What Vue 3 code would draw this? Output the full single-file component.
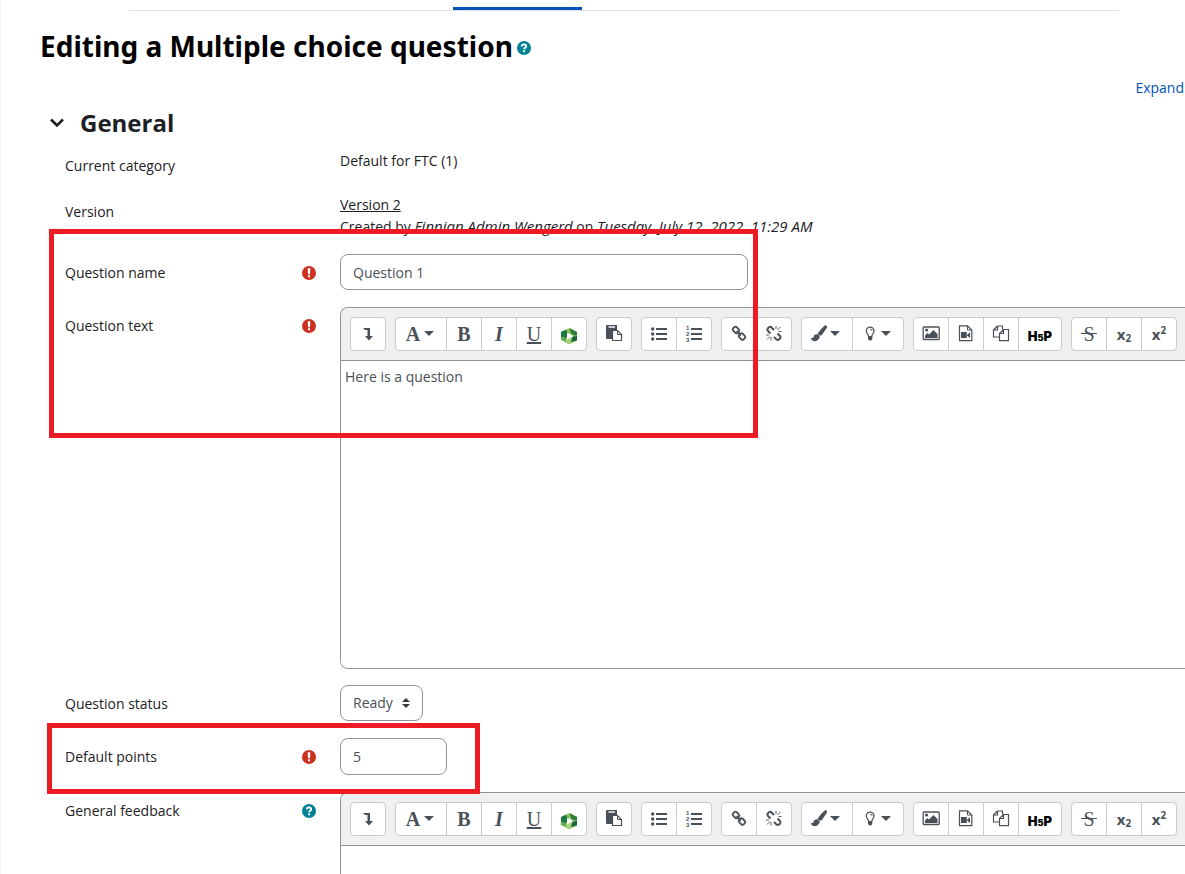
<script setup>
import { ref } from 'vue'

const name = ref('Question 1')
const status = ref('Ready')
const points = ref('5')
const bodies = ref(['Here is a question', ''])

const ink = '#495057'
const f = (d, fill = ink) => ({ d, fill, stroke: 'none', w: 0 })
const s = (d, w = 1, fill = 'none') => ({ d, fill, stroke: ink, w })

const icons = {
  toggle: [f('M4 3H11V11H14L10 15.5L6 11H8.5V5H6Z')],
  paste: [
    f('M2 0H12V5H8V14H2Q1 14 1 13V1Q1 0 2 0Z'),
    f('M3.500 1H10V3H3.500Z', '#c9ccd0'),
    s('M7.500 5.500H12.500L16.500 9.500V15.500H7.500Z', 1.200, '#fff'),
    s('M12.500 5.500V9.500H16.500'),
  ],
  list: [
    f('M1 4a1.700 1.700 0 1 0 3.400 0a1.700 1.700 0 1 0-3.400 0M1 9a1.700 1.700 0 1 0 3.400 0a1.700 1.700 0 1 0-3.400 0M1 14a1.700 1.700 0 1 0 3.400 0a1.700 1.700 0 1 0-3.400 0'),
    f('M6 3H17V5H6ZM6 8H17V10H6ZM6 13H17V15H6Z'),
  ],
  numbers: [f('M6 3H17V5H6ZM6 8H17V10H6ZM6 13H17V15H6Z')],
  link: [
    s('M3 3.500L4.500 2Q5.500 1.200 6.500 2L9 4.500Q9.800 5.500 9 6.500L7.500 8Q6.500 8.800 5.500 8L3 5.500Q2.200 4.500 3 3.500Z', 1.800),
    s('M9 10L10.500 8.500Q11.500 7.700 12.500 8.500L15 11Q15.800 12 15 13L13.500 14.500Q12.500 15.300 11.500 14.500L9 12Q8.200 11 9 10Z', 1.800),
    s('M6.500 6L11 10.500', 1.800),
  ],
  unlink: [
    s('M5.500 8.500L3 6Q1.800 4.500 3 3.200L4 2.200Q5.300 1.200 6.500 2.500L9 5', 2),
    s('M9 12L11.500 14.500Q13 15.500 14.200 14.300L15 13.500Q16 12 15 11L12.500 8.500', 2),
    s('M11 4V1M12.500 5L15.500 2M13.500 6.500H16.500M6 12V15.500M5 11.500L2 14.500M4 10H1', 0.900),
  ],
  brush: [
    f('M15 .2Q17.500 0 17 2.500L11.500 10.500Q9.600 11 7.500 8.700Q11 3.500 15 .2Z'),
    f('M7 9.300Q10 10 9.700 12.600Q8 16.200 4.300 16.200Q2 16 .700 13.500L3.500 12.500Q3.800 9.300 7 9.300Z'),
  ],
  bulb: [
    s('M7.500 11.500Q7.500 10 6.300 8.600Q4.300 5.500 6.300 3.300Q9 1 12 3.300Q14 5.500 12 8.600Q10.800 10 10.800 11.500', 1.200),
    s('M9.200 4.300Q11 4.300 11.200 6'),
    f('M7 11H11.300V14L10 15.500H8.300L7 14Z'),
  ],
  image: [
    s('M2 2H16.500Q17.200 2 17.200 3V13.500Q17.200 14.500 16.500 14.500H2Q1.200 14.500 1.200 13.500V3Q1.200 2 2 2Z', 1.300),
    f('M3 5a1.600 1.600 0 1 0 3.200 0a1.600 1.600 0 1 0-3.200 0M3 13V10.500L5.500 8L7 9.500L11.500 5L15.500 9V13Z'),
  ],
  video: [
    s('M2.500 .8H10.500L14.800 5V15.700H2.500Z', 1.200),
    s('M10.500 .8V5H14.800'),
    f('M4 7H9.800V13H4ZM10 10L13 7V13L10 10.500Z'),
  ],
  files: [
    s('M5.500 1H10.500V4.500M5.500 1L1.500 5V12H7.500M5.500 1V5H1.500', 1.200),
    s('M11.500 4.500H16.500V15.700H7.500V8.500ZM11.500 4.500V8.500H7.500', 1.200),
  ],
  logo: [
    f('M1 5L6 2.500L9 5L6.500 11L5 14.500L1 12.500Z', '#1b7a3f'),
    f('M1 9.500L5 10.500L7.500 15.800L1 13Z', '#5fae4e'),
    f('M6 2.500L10 1L17 5V10L12 8.500L7 5Z', '#8cbf5e'),
    f('M9.500 1.200L17 5V9L11.500 7Z', '#2b7d3c'),
    f('M17 8.500V13.500L9.500 17.500L5 15.500L6.500 11.500L12 10Z', '#a6cf7c'),
    f('M17 9V13.500L11 15L12.500 9.500Z', '#176a35'),
    f('M7 5.500L12.500 9.200L7 12.600Z', '#fff'),
  ],
}

const toolbar = [
  [{ id: 'toggle', label: 'Show more buttons' }],
  [
    { id: 'styles', label: 'Paragraph styles', text: 'A', caret: true },
    { id: 'bold', label: 'Bold', text: 'B' },
    { id: 'italic', label: 'Italic', text: 'I' },
    { id: 'underline', label: 'Underline', text: 'U' },
    { id: 'logo', label: 'Insert media' },
  ],
  [{ id: 'paste', label: 'Paste' }],
  [{ id: 'list', label: 'Unordered list' }, { id: 'numbers', label: 'Ordered list' }],
  [{ id: 'link', label: 'Link' }, { id: 'unlink', label: 'Unlink' }],
  [{ id: 'brush', label: 'Font color', caret: true }, { id: 'bulb', label: 'Highlight', caret: true }],
  [
    { id: 'image', label: 'Insert image' },
    { id: 'video', label: 'Insert video' },
    { id: 'files', label: 'Manage files' },
    { id: 'hp', label: 'Insert H5P' },
  ],
  [
    { id: 'strike', label: 'Strike through', text: 'S' },
    { id: 'sub', label: 'Subscript' },
    { id: 'sup', label: 'Superscript' },
  ],
]

const editors = [
  { id: 'qtext', label: 'Question text', required: true },
  { id: 'feedback', label: 'General feedback', required: false },
]
const rows = ['category', 'version', 'name', 'editor0', 'status', 'points', 'editor1']
const editorOf = (row) => editors[Number(row.slice(6))]
</script>

<template>
  <main class="page">
    <nav class="tabs"><a href="#" class="tab" aria-label="Question bank"></a></nav>

    <h2 class="title">
      Editing a Multiple choice question<button class="help" type="button" aria-label="Help">
        <svg viewBox="0 0 14 14"><circle cx="7" cy="7" r="7" fill="#008196" /><path d="M4.700 5.400Q4.800 3.400 7 3.400Q9.200 3.500 9.200 5.300Q9.200 6.300 8 6.900Q7.100 7.400 7.100 8.300" fill="none" stroke="#fff" stroke-width="1.900" /><path d="M6.100 9.300H8.100V11.200H6.100Z" fill="#fff" /></svg>
      </button>
    </h2>

    <div class="expand"><a href="#">Expand</a></div>

    <form class="form" @submit.prevent>
      <h3 class="section">
        <button type="button" class="chevron" aria-label="Collapse General">
          <svg viewBox="0 0 16 16"><path d="M2 4.500L8 10.500L14 4.500" fill="none" stroke="#1d2125" stroke-width="2.600" /></svg>
        </button>
        General
      </h3>

      <div class="rows">
        <div v-for="row in rows" :key="row" class="row" :class="'row-' + row">
          <template v-if="row === 'category'">
            <div class="label">Current category</div>
            <div class="value">Default for FTC (1)</div>
          </template>

          <template v-else-if="row === 'version'">
            <div class="label">Version</div>
            <div class="value">
              <a href="#" class="version">Version 2</a>
              <div class="created">Created by <em>Finnian Admin Wengerd</em> on <em>Tuesday, July 12, 2022, 11:29 AM</em></div>
            </div>
          </template>

          <template v-else-if="row === 'name' || row === 'points' || row === 'status'">
            <div class="label">
              <label :for="'f-' + row">{{ { name: 'Question name', points: 'Default points', status: 'Question status' }[row] }}</label>
              <svg v-if="row !== 'status'" class="mark" viewBox="0 0 14 14"><circle cx="7" cy="7" r="7" fill="#ca3120" /><path d="M5.700 2.300H8.300L8 8.200H6ZM6 9.300H8V11.300H6Z" fill="#fff" /></svg>
            </div>
            <div class="value">
              <input v-if="row === 'name'" id="f-name" v-model="name" class="field wide" type="text" />
              <input v-else-if="row === 'points'" id="f-points" v-model="points" class="field narrow" type="text" />
              <div v-else class="picker">
                <select id="f-status" v-model="status" class="field">
                  <option>Ready</option>
                  <option>Draft</option>
                </select>
                <svg class="arrows" viewBox="0 0 8 10"><path d="M4 0L8 4H0ZM4 10L0 6H8Z" fill="#343a40" /></svg>
              </div>
            </div>
          </template>

          <template v-else>
            <div class="label">
              <label :for="editorOf(row).id">{{ editorOf(row).label }}</label>
              <svg v-if="editorOf(row).required" class="mark" viewBox="0 0 14 14"><circle cx="7" cy="7" r="7" fill="#ca3120" /><path d="M5.700 2.300H8.300L8 8.200H6ZM6 9.300H8V11.300H6Z" fill="#fff" /></svg>
              <button v-else class="help mark" type="button" aria-label="Help">
                <svg viewBox="0 0 14 14"><circle cx="7" cy="7" r="7" fill="#008196" /><path d="M4.700 5.400Q4.800 3.400 7 3.400Q9.200 3.500 9.200 5.300Q9.200 6.300 8 6.900Q7.100 7.400 7.100 8.300" fill="none" stroke="#fff" stroke-width="1.900" /><path d="M6.100 9.300H8.100V11.200H6.100Z" fill="#fff" /></svg>
              </button>
            </div>
            <div class="editor">
              <div class="toolbar" role="toolbar">
                <div v-for="(group, g) in toolbar" :key="g" class="group">
                  <button v-for="b in group" :key="b.id" type="button" class="tool" :class="['tool-' + b.id, { drop: b.caret }]" :aria-label="b.label">
                    <span v-if="b.text" class="glyph">{{ b.text }}</span>
                    <span v-else-if="b.id === 'hp'" class="hp">H<small>5</small>P</span>
                    <span v-else-if="b.id === 'sub'" class="script">x<sub>2</sub></span>
                    <span v-else-if="b.id === 'sup'" class="script">x<sup>2</sup></span>
                    <svg v-else class="icon" viewBox="0 0 18 18">
                      <path v-for="(p, i) in icons[b.id]" :key="i" :d="p.d" :fill="p.fill" :stroke="p.stroke" :stroke-width="p.w" />
                      <g v-if="b.id === 'numbers'" class="digits">
                        <text x="1" y="5">1</text>
                        <text x="1" y="11">2</text>
                        <text x="1" y="17">3</text>
                      </g>
                    </svg>
                    <span v-if="b.caret" class="caret"></span>
                  </button>
                </div>
              </div>
              <textarea :id="editorOf(row).id" v-model="bodies[Number(row.slice(6))]" class="body"></textarea>
            </div>
          </template>
        </div>
      </div>
    </form>

    <div class="callout callout-question"></div>
    <div class="callout callout-points"></div>
  </main>
</template>

<style>
body {
  margin: 0;
  background: #fff;
}
</style>

<style scoped>
* {
  box-sizing: border-box;
}
.page {
  position: relative;
  height: 100vh;
  overflow: hidden;
  border-left: 1px solid #f5f5f5;
  color: #1d2125;
  font-family: "Open Sans", "Noto Sans", sans-serif;
  font-size: 14px;
  line-height: 22px;
}
button {
  padding: 0;
  border: 0;
  background: none;
  font: inherit;
  color: inherit;
}
a {
  color: #0f6cbf;
  text-decoration: none;
}
.tabs {
  display: flex;
  margin: 0 66px 0 128px;
  padding: 7px 0 0 324px;
  border-bottom: 1px solid #dee2e6;
}
.tab {
  width: 129px;
  height: 3px;
  background: #0053b8;
}
.title {
  display: flex;
  align-items: center;
  margin: 17px 0 0 39px;
  color: #000;
  font-family: "Noto Sans", sans-serif;
  font-size: 28px;
  line-height: 36px;
  font-weight: 700;
  white-space: nowrap;
}
.help {
  display: block;
  width: 14px;
  height: 14px;
}
.title .help {
  margin: 4px 0 0 4px;
}
.help svg {
  display: block;
}
.expand {
  display: flex;
  justify-content: flex-end;
  margin-top: 13px;
  padding-right: 1px;
}
.expand a {
  color: #0054b8;
}
.section {
  display: flex;
  align-items: center;
  gap: 15px;
  margin: 8px 0 0 48px;
  font-size: 24px;
  line-height: 32px;
  font-weight: 700;
}
.chevron {
  width: 16px;
  height: 16px;
}
.chevron svg {
  display: block;
}
.rows {
  display: flex;
  flex-direction: column;
  gap: 16px;
  margin: 11px 0 0 64px;
}
.row {
  display: grid;
  grid-template-columns: 275px minmax(0, 1fr);
  align-items: start;
  min-height: 37px;
}
.row-category {
  min-height: 28px;
}
.row-points {
  min-height: 38px;
}
.label {
  display: flex;
  justify-content: space-between;
  align-items: center;
  padding: 8px 24px 0 0;
}
.row-category .label {
  padding-top: 5px;
}
.row-version .label {
  padding-top: 7px;
}
.mark {
  width: 14px;
  height: 14px;
}
.version {
  display: block;
  color: #1d2125;
  text-decoration: underline;
}
.created {
  white-space: nowrap;
}
.created em {
  font-size: 15px;
  line-height: 20px;
}
.field {
  display: block;
  height: 36px;
  margin: 0;
  padding: 0 12px;
  border: 1px solid #8f959e;
  border-radius: 8px;
  background: #fff;
  color: #495057;
  font: inherit;
}
.wide {
  width: 408px;
}
.narrow {
  width: 107px;
  height: 37px;
}
.picker {
  position: relative;
  width: 83px;
}
.picker .field {
  width: 100%;
  appearance: none;
}
.arrows {
  position: absolute;
  top: 13px;
  right: 13px;
  width: 8px;
  height: 10px;
  pointer-events: none;
}
.editor {
  border: 1px solid #8f959e;
  border-right: 0;
  border-radius: 8px 0 0 8px;
  overflow: hidden;
}
.toolbar {
  display: flex;
  gap: 9px;
  padding: 9px;
  border-bottom: 1px solid #8f959e;
  background: #f0f0f0;
}
.group {
  display: flex;
  flex: none;
  height: 34px;
  border: 1px solid #c8cacc;
  border-radius: 4px;
  background: #fff;
}
.tool {
  display: flex;
  align-items: center;
  justify-content: center;
  width: 34px;
  padding-bottom: 1px;
  color: #495057;
}
.tool + .tool {
  width: 35px;
  border-left: 1px solid #c8cacc;
}
.tool.drop {
  width: 50px;
  justify-content: flex-start;
  padding-left: 8px;
}
.tool + .tool.drop {
  width: 51px;
}
.tool + .tool-hp {
  width: 43px;
}
.icon {
  width: 18px;
  height: 18px;
}
.tool-logo .icon {
  margin-top: 4px;
}
.digits {
  fill: #495057;
  font: 700 6px "Liberation Sans", sans-serif;
}
.glyph {
  width: 18px;
  font: 700 20px/22px "Liberation Serif", serif;
  text-align: center;
}
.tool-italic .glyph {
  font-style: italic;
}
.tool-underline .glyph {
  font-weight: 400;
  text-decoration: underline;
}
.tool-strike .glyph {
  font-weight: 400;
  background: linear-gradient(#495057, #495057) center / 16px 1px no-repeat;
}
.hp {
  margin-top: 6px;
  color: #000;
  font: 900 13px/16px Inter, sans-serif;
}
.hp small {
  font-size: 9px;
}
.script {
  font-size: 15px;
  font-weight: 700;
}
.script sub,
.script sup {
  font-size: 10px;
  line-height: 0;
}
.script sub {
  vertical-align: -2px;
}
.script sup {
  vertical-align: 6px;
}
.caret {
  margin-left: 2px;
  border: 5px solid transparent;
  border-top-color: #495057;
  border-bottom: 0;
}
.body {
  display: block;
  width: 100%;
  height: 307px;
  padding: 5px 4px;
  border: 0;
  outline: 0;
  resize: none;
  background: #fff;
  color: #495057;
  font: inherit;
}
.callout {
  position: absolute;
  border: 5px solid #ed1c24;
  pointer-events: none;
}
.callout-question {
  top: 229px;
  left: 48px;
  width: 709px;
  height: 209px;
}
.callout-points {
  top: 723px;
  left: 46px;
  width: 433px;
  height: 71px;
}
</style>
